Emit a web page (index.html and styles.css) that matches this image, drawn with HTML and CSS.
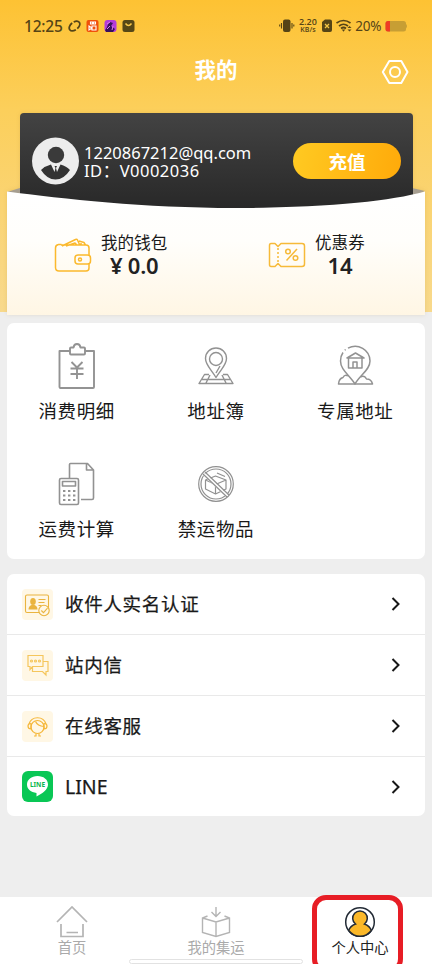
FILE: index.html
```html
<!DOCTYPE html>
<html lang="zh-CN">
<head>
<meta charset="utf-8">
<title>我的</title>
<link rel="stylesheet" href="styles.css">
</head>
<body>
<div class="app">
  <header class="hero">
    <svg class="backdrop" viewBox="0 0 432 323" width="432" height="323">
      <defs>
        <linearGradient id="dark" x1="0" y1="0" x2="0" y2="1"><stop offset="0" stop-color="#434343"/><stop offset="1" stop-color="#282828"/></linearGradient>
        <linearGradient id="paper" x1="0" y1="0" x2="0" y2="1"><stop offset="0" stop-color="#fff"/><stop offset=".4" stop-color="#fffefb"/><stop offset="1" stop-color="#fff6e4"/></linearGradient>
      </defs>
      <path d="M7 192L20 188H412L425 191L412 197H20Z" fill="#a69e90"/>
      <path d="M20 117a4 4 0 0 1 4-4H409a4 4 0 0 1 4 4V209H20Z" fill="url(#dark)"/>
      <path d="M7 191.500C65 199 148 208.500 242 208C335 207 390 201 425 191.500V315H7Z" fill="url(#paper)"/>
    </svg>
    <div class="status">
      <span class="clock">12:25</span>
      <svg class="apps" viewBox="68 19 68 14" width="68" height="14">
        <g fill="none" stroke="#554416" stroke-width="1.800"><ellipse cx="74.500" cy="26" rx="6" ry="3.800" transform="rotate(-38 74.500 26)" stroke-dasharray="14 1.800" stroke-dashoffset="7"/></g>
        <rect x="86.500" y="20" width="12" height="12" rx="2" fill="#f0510a"/><path d="M90.500 22h2v2h-2zM93.500 22h2v2h-2zM92 26h4v4h-4zM92 28l-3-2v4z" fill="none" stroke="#fff" stroke-width="1.100"/>
        <rect x="104.500" y="20" width="12" height="12" rx="3" fill="#b43bd9"/><path d="M105 30c3-3 2-6 5-8l3 1-2 3 4 3-2 3h-7z" fill="#37105d"/><path d="M107 29l3-3M112 30l1-4M107 24l3-2" stroke="#de79eb"/>
        <rect x="122.500" y="20" width="12" height="12" rx="2.500" fill="#564716"/><path d="M125.500 23.500q3 4 6 0" fill="none" stroke="#f6c649" stroke-width="1.500"/>
      </svg>
      <svg class="vibrate" viewBox="279 18 16 16" width="16" height="16"><rect x="283" y="19.500" width="7.500" height="12.500" rx="2" fill="#554416"/><path d="M281.500 23v5.500M279.700 24.500v2M292 23v5.500M293.800 24.500v2" stroke="#554416" stroke-width="1.100"/></svg>
      <span class="speed"><span class="rate">2.20</span><span class="unit">KB/s</span></span>
      <svg class="signal" viewBox="322 18 32 16" width="32" height="16"><path d="M323 22l3-2.500h5a2 2 0 0 1 2 2V30a2 2 0 0 1-2 2h-6a2 2 0 0 1-2-2z" fill="#554416"/><path d="M326 24l4 4m0-4l-4 4" stroke="#f4c545" stroke-width="1.300"/><g fill="none" stroke="#554416" stroke-width="1.700"><path d="M337.500 23q7-5 14 0M340 26q4.500-3.500 9 0M342 28.500q2.500-2 5 0"/></g><path d="M342.800 29.500h3.400l-1.700 2.200zM348.500 28h4l-2-2zM348.500 29.500h4l-2 2z" fill="#554416"/></svg>
      <span class="percent">20%</span>
      <svg class="battery" viewBox="386 20 23 12" width="23" height="12"><rect x="386.500" y="21" width="20.500" height="10.500" rx="2.500" fill="#c79e34"/><path d="M391 21h-2a2.500 2.500 0 0 0-2.500 2.500v5.500a2.500 2.500 0 0 0 2.500 2.500h2z" fill="#ef3b24"/><path d="M407 24q2 2 0 4.500z" fill="#c79e34"/></svg>
    </div>
    <div class="titlebar">
      <h1>我的</h1>
      <svg class="gear" viewBox="381 58 28 28" width="28" height="28" fill="none" stroke="#fff" stroke-width="2"><path d="M389.300 61h12l6.200 11-6.200 11h-12l-6.500-11z" stroke-linejoin="round"/><circle cx="395" cy="72" r="5"/></svg>
    </div>
    <div class="member">
      <svg viewBox="32 137 47 48" width="47" height="48"><circle cx="55.500" cy="161" r="23.500" fill="#ededed"/><circle cx="56" cy="155" r="8.200" fill="#3a3a3a"/><path d="M41 170q4-4 10-5.500l3.500 7.500 1-4-1-2h2.500l-1 2 1 4 3.500-7.500q6 1.500 9.500 5.500q-6 9.500-14.500 9.500t-14.500-9.500z" fill="#333"/></svg>
      <div class="identity"><div class="mail">1220867212@qq.com</div><div class="uid">ID：V0002036</div></div>
      <button class="recharge">充值</button>
    </div>
    <div class="assets">
      <div class="asset wallet">
        <svg viewBox="54 237 38 36" width="38" height="36" fill="none" stroke="#fbb92d" stroke-width="1.500" stroke-linejoin="round"><path d="M61 245h25q3 0 3 3v7M89 264v4q0 3-3 3H59q-3.500 0-3.500-3.500V248q0-3 3-3.500h3M62 246l13.500-6.500q1.500-.5 2 .5l2 4.500M66 246l9-3 2 2M79 241l5 1.500 1.500 2.500M81 243v2"/><rect x="75" y="255" width="15.500" height="9" rx="3"/><circle cx="80" cy="259.500" r="1.500"/></svg>
        <div class="figures"><div class="name">我的钱包</div><div class="value">¥ 0.0</div></div>
      </div>
      <div class="asset coupon">
        <svg viewBox="268 241 38 28" width="38" height="28" fill="none" stroke="#f6ba39" stroke-width="1.500" stroke-linejoin="round"><path d="M271 243.500h4l3 3 3-3h21q2.500 0 2.500 2.500v18q0 2.500-2.500 2.500h-21l-3-3-3 3h-4q-1.500 0-1.500-2v-19q0-2 1.500-2z"/><path d="M278 248v14" stroke-dasharray="2 2"/><circle cx="288" cy="251.500" r="2.300"/><circle cx="295.500" cy="258" r="2.300"/><path d="M297 249l-10.500 11.500"/></svg>
        <div class="figures"><div class="name">优惠券</div><div class="value">14</div></div>
      </div>
    </div>
  </header>

  <nav class="tools">
    <a class="tool"><svg viewBox="57 342 40 48" width="40" height="48" fill="none" stroke="#939393" stroke-width="1.900" stroke-linejoin="round"><path d="M70 351H59.500v36q0 1 1 1h32.500q1 0 1-1V351H84.500M70 348.500q0-1 1-1h2.500q.5-3.500 3.500-3.500t3.500 3.500H84q1 0 1 1v5q0 1-1 1H71q-1 0-1-1zM71.500 362l5.500 5.500 5.500-5.500M77 367.500V379M70.500 368.500h13M70.500 374h13"/></svg><span>消费明细</span></a>
    <a class="tool"><svg viewBox="196 342 40 48" width="40" height="48" fill="none" stroke="#929292" stroke-width="1.400" stroke-linejoin="round"><path d="M216 377.500C211 369 205.500 365 205.500 358.500a10.500 10.500 0 0 1 21 0C226.500 365 221 369 216 377.500z"/><circle cx="216" cy="359" r="6.500"/><path d="M209 374.500h-4.500l-5.500 9h34l-5.500-9h-4.500M202 379.500h28M210 375l-4 8M222 375l4 8M216 373l4-7"/></svg><span>地址簿</span></a>
    <a class="tool"><svg viewBox="335 342 40 48" width="40" height="48" fill="none" stroke="#929292" stroke-width="1.500" stroke-linejoin="round"><path d="M343 352.500a14.500 14.500 0 0 0-2.500 8.500c0 9 9 14 14.500 23c5-9 15-14 15-23a14.800 14.800 0 0 0-22-12.800M344.800 350.300l.8-.8"/><path d="M347 358l8.500-5 8.500 5zM348.500 358.500v9.500h13.500V358.500M353 368v-6h4v6M348 376q-3-2-5 1.500-4 1-4.500 6.500h34q-1-5-6-5-2-4-6-2"/></svg><span>专属地址</span></a>
    <a class="tool"><svg viewBox="57 460 40 48" width="40" height="48" fill="none" stroke="#929292" stroke-width="1.600" stroke-linejoin="round"><path d="M69.500 478V464.500q0-1 1-1h17l6 6.500v28q0 1.500-1.500 1.500H81M86.500 464v6h6.500"/><rect x="59.500" y="478.500" width="19" height="26" rx="1.500"/><rect x="62.500" y="481.500" width="13" height="4.500"/><g stroke-dasharray="2.400 2.600"><path d="M63 491h13M63 495.500h13M63 500h13" stroke-width="2"/></g></svg><span>运费计算</span></a>
    <a class="tool"><svg viewBox="196 460 40 48" width="40" height="48" fill="none" stroke="#919191" stroke-width="1.200" stroke-linejoin="round"><circle cx="216" cy="484" r="17.300"/><circle cx="216" cy="484" r="15"/><path d="M205.500 480l10-4 10.500 4v9l-10.500 5-10-5zM205.500 480l10 4.500 10.500-4.500M215.500 484.500v9M217 473l8 3.500"/><path d="M204 474l23 22" stroke="#fff" stroke-width="3"/><path d="M205 472l24 23M203 474l24 23"/></svg><span>禁运物品</span></a>
  </nav>

  <section class="list">
    <a class="row"><svg class="tile" viewBox="21.500 588 31 31" width="31" height="31"><rect x="21.500" y="588" width="31" height="31" rx="4" fill="#fff7e5"/><g fill="none" stroke="#eab43f" stroke-width="1.100"><rect x="25" y="594" width="23" height="17.500" rx="1.500"/><path d="M38 598.500h7M38 601.500h6M38 604.500h3"/><circle cx="43.500" cy="609.500" r="5.200" fill="#fff7e5"/><path d="M40.800 609.500l2.200 2.200 4-4.500"/></g><ellipse cx="32.500" cy="600.500" rx="2.800" ry="3.500" fill="#eab43f"/><path d="M28 608.500q0-3.500 3-4.500h3q3 1 3 4.500z" fill="#eab43f"/></svg><span>收件人实名认证</span><svg class="arrow" viewBox="0 0 10 14" width="10" height="14"><path d="M1.500 1l6 6-6 6"/></svg></a>
    <a class="row"><svg class="tile" viewBox="21.500 649 31 31" width="31" height="31"><rect x="21.500" y="649" width="31" height="31" rx="4" fill="#fff7e5"/><g fill="none" stroke="#f5c65c" stroke-width="1.200"><path d="M27.500 654.500h15v11H32l-2.500 3v-3h-2zM43 660.500h4.500v10h-2v3.500l-3.500-3.500H32v-5"/><circle cx="31" cy="660" r="1"/><circle cx="35" cy="660" r="1"/><circle cx="39" cy="660" r="1"/></g></svg><span>站内信</span><svg class="arrow" viewBox="0 0 10 14" width="10" height="14"><path d="M1.500 1l6 6-6 6"/></svg></a>
    <a class="row"><svg class="tile" viewBox="21.500 710 31 31" width="31" height="31"><rect x="21.500" y="710" width="31" height="31" rx="4" fill="#fff7e5"/><g fill="none" stroke="#f5b73a" stroke-width="1.200"><path d="M28.500 723a8.900 8.900 0 0 1 17 0"/><circle cx="37" cy="726" r="6.500"/><path d="M30.500 722.500q-3 0-3 2.500 0 3 3 3zM43.500 722.500q3 0 3 2.500 0 3-3 3zM35 720.500q2 4.500 8.500 5M35.500 732.500v2.500h-2M38.500 732.500v2.500h2"/></g></svg><span>在线客服</span><svg class="arrow" viewBox="0 0 10 14" width="10" height="14"><path d="M1.500 1l6 6-6 6"/></svg></a>
    <a class="row"><svg class="tile" viewBox="21.500 771 31 31" width="31" height="31"><rect x="21.500" y="771" width="31" height="31" rx="6" fill="#09c755"/><path d="M37 776c-6 0-10.500 3.600-10.500 8.500 0 4.500 4 7.800 9.500 8.500v3.500c6-3 11.500-7 11.500-12S43 776 37 776z" fill="#fff"/><text x="37" y="787.200" text-anchor="middle" class="logotext">LINE</text></svg><span>LINE</span><svg class="arrow" viewBox="0 0 10 14" width="10" height="14"><path d="M1.500 1l6 6-6 6"/></svg></a>
  </section>

  <footer class="tabs">
    <a class="tab"><svg viewBox="56 905 32 34" width="32" height="34" fill="none" stroke="#b4b4b4" stroke-width="1.700"><path d="M57 922l15-15 15 15M61 924v12.500h22v-12.500M66.500 932.500h11.500"/></svg><span>首页</span></a>
    <a class="tab"><svg viewBox="200 905 32 34" width="32" height="34" fill="none" stroke="#b4b4b4" stroke-width="1.400"><path d="M207.500 916l-5 2v14.500l13.500 4 13.500-4V918l-5-2M202.500 918l13.500 4 13.500-4M216 922v14.500M216 907v9M211.500 912l4.500 4.500 4.500-4.500"/></svg><span>我的集运</span></a>
    <a class="tab active"><svg viewBox="344 905 32 34" width="32" height="34" stroke="#222a35" stroke-width="1.500"><circle cx="360" cy="922" r="14.300" fill="#fff"/><path d="M348.700 930.500q1.500-4.500 6.800-6.500a7.300 7.300 0 1 1 9 0q5.300 2 6.800 6.500q-4.500 5.800-11.300 5.800t-11.300-5.800z" fill="#fbb829"/></svg><span>个人中心</span></a>
    <i class="home-indicator"></i>
    <i class="highlight"></i>
  </footer>
</div>
</body>
</html>
```
FILE: styles.css
```css
* { box-sizing: border-box; }
body {
  margin: 0;
  background: #eee;
  color: #191919;
  font-family: "Noto Sans", "Noto Sans CJK SC", sans-serif;
}
svg { display: block; flex: none; }
.app {
  display: flex;
  flex-direction: column;
  width: 432px;
  height: 964px;
  overflow: hidden;
}
.hero {
  position: relative;
  height: 323px;
  background: linear-gradient(#fdc233, #fccf5b 110px, #f8d98c 312px, #eee 312px);
}
.backdrop { position: absolute; top: 0; left: 0; filter: drop-shadow(0 0 2px rgba(120, 90, 20, .13)); }
.status, .titlebar, .member, .assets { position: relative; display: flex; }
.status {
  height: 50px;
  padding: 1px 24px 0;
  align-items: center;
  color: #554416;
}
.clock {
  width: 44px;
  font: 500 15.500px/20px "Noto Sans", sans-serif;
  letter-spacing: -.2px;
}
.vibrate { margin-left: 143px; }
.speed {
  width: 27px;
  text-align: center;
  font-weight: 600;
  font-family: "Open Sans", sans-serif;
}
.speed span { display: block; }
.rate { font-size: 9px; line-height: 8px; }
.unit { font-size: 7px; line-height: 8px; }
.percent { width: 29px; margin-left: 2px; font-size: 13.500px; line-height: 18px; letter-spacing: -.2px; white-space: nowrap; }
.battery { margin-left: 1px; }
.titlebar { height: 43px; justify-content: center; padding-top: 4px; }
.titlebar h1 {
  margin: 0;
  color: #fff;
  font-size: 21.500px;
  line-height: 32px;
  font-weight: 700;
}
.gear { position: absolute; top: 8px; right: 23px; }
.member {
  height: 95px;
  margin: 20px 19px 0 20px;
  padding: 24px 12px 0;
  color: #fff;
}
.identity { margin: 6px 0 0 5px; width: 209px; line-height: 19px; white-space: nowrap; }
.mail { font-size: 16.500px; }
.uid { margin-top: -1px; font-size: 16.500px; letter-spacing: .5px; }
.recharge {
  width: 108px;
  height: 36px;
  margin: 6px 0 0;
  padding: 0 0 1px;
  border: 0;
  border-radius: 18px;
  background: linear-gradient(100deg, #ffca22, #ffaa0a);
  color: #fff;
  font: 700 18.500px/34px "Noto Sans CJK SC", sans-serif;
}
.assets { padding: 25px 0 0 54px; }
.asset { display: flex; width: 214px; }
.coupon { width: 150px; }
.wallet svg { margin-top: 4px; }
.coupon svg { margin-top: 8px; }
.figures { margin-left: 9px; text-align: center; white-space: nowrap; }
.name { font-size: 16.500px; line-height: 20px; letter-spacing: .1px; }
.value { font-size: 22px; line-height: 25px; font-weight: 600; letter-spacing: -.2px; color: #222; }
.tools, .list { margin: 0 7px; background: #fff; border-radius: 7px; flex: none; }
.tools {
  display: grid;
  grid-template-columns: repeat(3, 139.300px);
  grid-auto-rows: 118px;
  height: 236px;
}
.tool { display: flex; flex-direction: column; align-items: center; padding-top: 19px; }
.tool span { margin-top: 8px; font-size: 18.500px; line-height: 26px; letter-spacing: .6px; }
.list { margin-top: 15px; height: 242px; }
.row {
  display: flex;
  align-items: center;
  height: 61px;
  padding: 0 24px 0 14.500px;
  border-bottom: 1.500px solid #e9e9e9;
}
.row:last-child { height: 59px; border: 0; }
.row span { flex: 1; margin-left: 12.500px; font-size: 18.500px; line-height: 28px; letter-spacing: .7px; -webkit-text-stroke: .25px #191919; }
.row:last-child span { letter-spacing: 0; font-size: 19.500px; }
.arrow path { fill: none; stroke: #181818; stroke-width: 2; }
.logotext { font: 700 6.500px "Noto Sans", sans-serif; fill: #09b74d; }
.tabs {
  position: relative;
  display: grid;
  grid-template-columns: repeat(3, 1fr);
  height: 67px;
  margin-top: auto;
  background: #fff;
}
.tab { display: flex; flex-direction: column; align-items: center; padding-top: 8px; color: #aaa; }
.tab span { font-size: 14.300px; line-height: 17px; }
.active { color: #222; }
.home-indicator {
  position: absolute;
  left: 129px;
  top: 62px;
  width: 174px;
  height: 5px;
  border: 1px solid #e2e2e2;
  border-radius: 3px;
  background: #fff;
}
.highlight {
  position: absolute;
  left: 312px;
  top: -2px;
  width: 91px;
  height: 78px;
  border: 5px solid #e71d25;
  border-radius: 14px;
}
```
